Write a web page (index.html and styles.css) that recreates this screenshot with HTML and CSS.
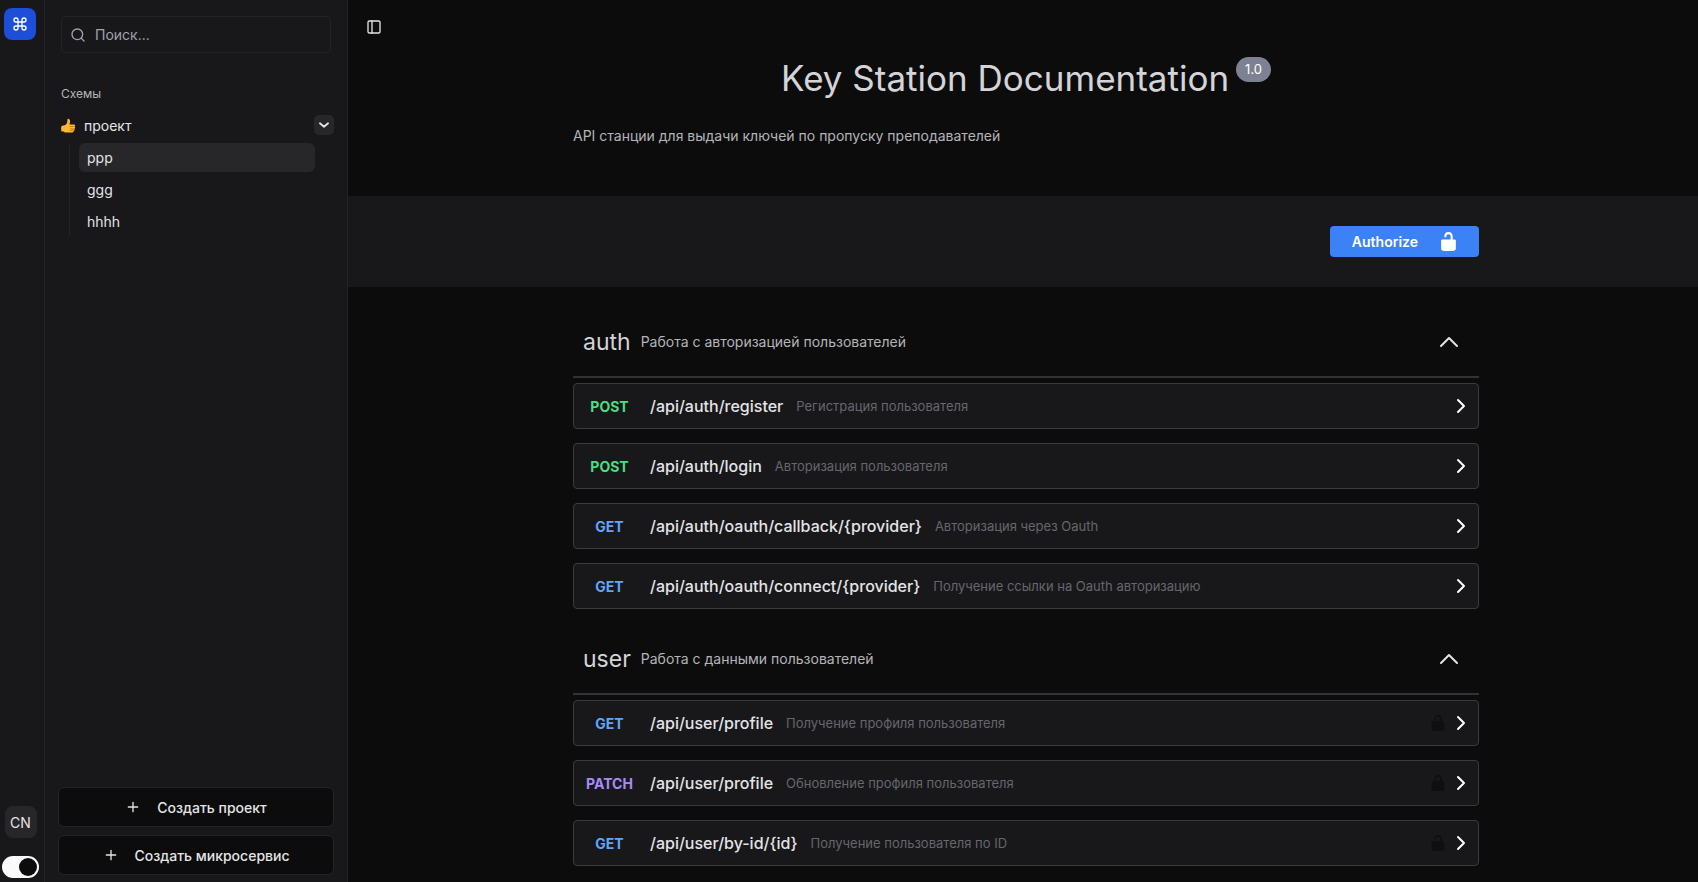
FILE: index.html
```html
<!DOCTYPE html>
<html lang="ru">
<head>
    <meta charset="UTF-8">
    <title>Key Station Documentation</title>
    <link rel="stylesheet" href="styles.css">
</head>
<body>
<!-- общие иконки -->
<svg class="sprite" aria-hidden="true">
    <symbol id="plus" viewBox="0 0 24 24"><path d="M5 12h14M12 5v14"/></symbol>
    <symbol id="right" viewBox="0 0 10 16"><path d="M2 2l6 6-6 6"/></symbol>
    <symbol id="up" viewBox="0 0 20 12"><path d="M2 10l8-8 8 8"/></symbol>
    <symbol id="locked" viewBox="0 0 20 20"><path d="M15.8 8H14V5.6C14 2.7 12.7 1 10 1 7.2 1 6 2.7 6 5.6V8H4c-.6 0-1 .6-1 1.2V17c0 .7.5 1.4 1.2 1.6l1.4.4h8.8l1.4-.4c.7-.2 1.2-.9 1.2-1.6V9.2c0-.6-.7-1.2-1.2-1.2zM12 8H8V5.200C8 3.700 8.700 3 10 3s2 .7 2 2.200z"/></symbol>
    <symbol id="unlocked" viewBox="0 0 20 20"><path d="M15.8 8H14V5.6C14 2.7 12.7 1 10 1 7.2 1 6 2.7 6 5.6V6h2v-.8C8 3.7 8.7 3 10 3s2 .7 2 2.200V8H4c-.6 0-1 .6-1 1.2V17c0 .7.5 1.4 1.2 1.6l1.4.4h8.8l1.4-.4c.7-.2 1.2-.9 1.2-1.6V9.2c0-.6-.7-1.2-1.2-1.2z"/></symbol>
</svg>

<div class="app">
    <nav class="rail">
        <a class="logo" href="#" aria-label="Главная">
            <svg viewBox="0 0 24 24"><path d="M15 6v12a3 3 0 1 0 3-3H6a3 3 0 1 0 3 3V6a3 3 0 1 0-3 3h12a3 3 0 1 0-3-3"/></svg>
        </a>
        <div class="rail-bottom">
            <button class="avatar" type="button">CN</button>
            <input class="switch" type="checkbox" checked aria-label="Тёмная тема">
        </div>
    </nav>

    <aside class="sidebar">
        <label class="search">
            <svg viewBox="0 0 24 24"><circle cx="11" cy="11" r="8"/><path d="M21 21l-4.3-4.3"/></svg>
            <input type="text" placeholder="Поиск..." aria-label="Поиск">
        </label>

        <div class="tree">
            <h2>Схемы</h2>
            <div class="project">
                <svg class="thumb" viewBox="0 0 28 28">
                    <path fill="#fdb92c" d="M8 13c4-2 4-6 4-10 0-3 5-2 5 3 0 2-1 4-1 6h8c3 0 3 3 1 4 2 1 2 3 0 4 1 1 0 3-1 3 0 2-1 4-3 4H9c-3 0-3-2-4-2H1c-1-3-1-7 0-10z"/>
                    <path fill="none" stroke="#d98012" d="M17 16h8M18 20h7M17 23h7"/>
                </svg>
                <span>проект</span>
                <button class="toggle" type="button" aria-label="Свернуть">
                    <svg viewBox="0 0 24 24"><path d="M5 9l7 6 7-6"/></svg>
                </button>
            </div>
            <ul>
                <li><a class="active" href="#">ppp</a></li>
                <li><a href="#">ggg</a></li>
                <li><a href="#">hhhh</a></li>
            </ul>
        </div>

        <div class="create">
            <button type="button"><svg viewBox="0 0 24 24"><use href="#plus"/></svg>Создать проект</button>
            <button type="button"><svg viewBox="0 0 24 24"><use href="#plus"/></svg>Создать микросервис</button>
        </div>
    </aside>

    <main class="content">
        <button class="panel" type="button" aria-label="Боковая панель">
            <svg viewBox="0 0 24 24"><rect x="3" y="3" width="18" height="18" rx="2"/><path d="M9 3v18"/></svg>
        </button>

        <header class="info wrapper">
            <h1>Key Station Documentation <span class="version">1.0</span></h1>
            <p>API станции для выдачи ключей по пропуску преподавателей</p>
        </header>

        <div class="auth-bar wrapper">
            <button class="authorize" type="button">Authorize<svg viewBox="0 0 20 20"><use href="#unlocked"/></svg></button>
        </div>

        <div class="tags wrapper">
            <section class="tag">
                <div class="tag-head">
                    <h3>auth</h3>
                    <p>Работа с авторизацией пользователей</p>
                    <button type="button" aria-label="Свернуть auth"><svg viewBox="0 0 20 12"><use href="#up"/></svg></button>
                </div>
                <button class="op post" type="button">
                    <span class="method">POST</span><span class="path">/api/auth/register</span><span class="desc">Регистрация пользователя</span>
                    <svg class="arrow" viewBox="0 0 10 16"><use href="#right"/></svg>
                </button>
                <button class="op post" type="button">
                    <span class="method">POST</span><span class="path">/api/auth/login</span><span class="desc">Авторизация пользователя</span>
                    <svg class="arrow" viewBox="0 0 10 16"><use href="#right"/></svg>
                </button>
                <button class="op get" type="button">
                    <span class="method">GET</span><span class="path">/api/auth/oauth/callback/{provider}</span><span class="desc">Авторизация через Oauth</span>
                    <svg class="arrow" viewBox="0 0 10 16"><use href="#right"/></svg>
                </button>
                <button class="op get" type="button">
                    <span class="method">GET</span><span class="path">/api/auth/oauth/connect/{provider}</span><span class="desc">Получение ссылки на Oauth авторизацию</span>
                    <svg class="arrow" viewBox="0 0 10 16"><use href="#right"/></svg>
                </button>
            </section>

            <section class="tag">
                <div class="tag-head">
                    <h3>user</h3>
                    <p>Работа с данными пользователей</p>
                    <button type="button" aria-label="Свернуть user"><svg viewBox="0 0 20 12"><use href="#up"/></svg></button>
                </div>
                <button class="op get" type="button">
                    <span class="method">GET</span><span class="path">/api/user/profile</span><span class="desc">Получение профиля пользователя</span>
                    <svg class="lock" viewBox="0 0 20 20"><use href="#locked"/></svg>
                    <svg class="arrow" viewBox="0 0 10 16"><use href="#right"/></svg>
                </button>
                <button class="op patch" type="button">
                    <span class="method">PATCH</span><span class="path">/api/user/profile</span><span class="desc">Обновление профиля пользователя</span>
                    <svg class="lock" viewBox="0 0 20 20"><use href="#locked"/></svg>
                    <svg class="arrow" viewBox="0 0 10 16"><use href="#right"/></svg>
                </button>
                <button class="op get" type="button">
                    <span class="method">GET</span><span class="path">/api/user/by-id/{id}</span><span class="desc">Получение пользователя по ID</span>
                    <svg class="lock" viewBox="0 0 20 20"><use href="#unlocked"/></svg>
                    <svg class="arrow" viewBox="0 0 10 16"><use href="#right"/></svg>
                </button>
            </section>
        </div>
    </main>
</div>
</body>
</html>
```
FILE: styles.css
```css
*{
    padding: 0;
    margin: 0;
    box-sizing: border-box;
}

body{
    background: #0c0c0d;
    color: #e4e4e7;
    font-family: Inter, "Liberation Sans", sans-serif;
    font-size: 14px;
}

button, input{
    font: inherit;
    color: inherit;
    border: none;
    background: none;
}

a{
    color: inherit;
    text-decoration: none;
}

svg{
    flex: none;
    fill: none;
    stroke: currentColor;
    stroke-width: 2;
    stroke-linecap: round;
    stroke-linejoin: round;
}

.sprite{
    display: none;
}

.app{
    display: flex;
    height: 100vh;
    overflow: hidden;
}

/* узкая полоса слева */
.rail{
    width: 45px;
    flex: none;
    padding: 8px 4px 4px 2px;
    display: flex;
    flex-direction: column;
    align-items: flex-start;
    justify-content: space-between;
    background: #18181b;
    border-right: 1px solid #232326;
}

.logo{
    width: 32px;
    height: 32px;
    margin-left: 2px;
    display: grid;
    place-items: center;
    border-radius: 8px;
    background: #1d4ed8;
    color: #fff;
}

.logo svg{
    width: 16px;
    height: 16px;
}

.rail-bottom{
    display: flex;
    flex-direction: column;
    align-items: center;
    gap: 18px;
}

.avatar{
    width: 32px;
    height: 32px;
    border-radius: 8px;
    background: #27272a;
}

.switch{
    appearance: none;
    width: 37px;
    height: 22px;
    flex: none;
    padding: 2px;
    display: flex;
    justify-content: flex-end;
    border-radius: 11px;
    background: #fafafa;
}

.switch::before{
    content: "";
    width: 18px;
    height: 18px;
    border-radius: 50%;
    background: #0c0c0d;
}

/* дерево проектов */
.sidebar{
    width: 303px;
    flex: none;
    padding: 16px 13px 7px;
    display: flex;
    flex-direction: column;
    background: #18181b;
    border-right: 1px solid #232326;
}

.search{
    height: 37px;
    margin: 0 3px;
    padding: 0 8px;
    display: flex;
    align-items: center;
    gap: 9px;
    border: 1px solid #232326;
    border-radius: 4px;
    color: #a1a1aa;
}

.search svg{
    width: 16px;
    height: 16px;
}

.search input{
    width: 100%;
    outline: none;
}

.search input::placeholder{
    color: #a1a1aa;
}

.tree{
    flex: 1;
    padding: 32px 3px 0;
}

.tree h2{
    font-size: 12px;
    line-height: 18px;
    font-weight: 400;
    color: #b4b4b8;
}

.project{
    height: 32px;
    margin: 6px 0 2px;
    display: flex;
    align-items: center;
    gap: 8px;
}

.thumb{
    width: 15px;
    height: 15px;
    stroke: none;
}

.toggle{
    width: 20px;
    height: 20px;
    margin-left: auto;
    margin-right: -3px;
    display: grid;
    place-items: center;
    border-radius: 5px;
    background: #27272a;
}

.toggle svg{
    width: 14px;
    height: 14px;
    stroke-width: 3;
}

.tree ul{
    list-style: none;
    margin: 0 16px 0 8px;
    padding-left: 9px;
    display: grid;
    gap: 3px;
    border-left: 1px solid #232326;
}

.tree a{
    display: block;
    padding: 0 8px;
    line-height: 29px;
    border-radius: 6px;
}

.tree .active{
    background: #27272a;
}

.create{
    display: grid;
    gap: 8px;
}

.create button{
    height: 40px;
    display: flex;
    align-items: center;
    justify-content: center;
    gap: 16px;
    border: 1px solid #232326;
    border-radius: 6px;
    background: #0c0c0d;
    font-weight: 500;
}

.create svg{
    width: 16px;
    height: 16px;
}

/* документация */
.content{
    flex: 1;
    min-width: 0;
    display: grid;
    align-content: start;
    overflow: hidden;
}

.wrapper{
    padding: 0 219px 0 225px;
}

.panel{
    width: 16px;
    height: 16px;
    margin: 19px 0 0 18px;
}

.panel svg{
    display: block;
    width: 16px;
    height: 16px;
}

.info{
    height: 161px;
    padding-top: 20px;
}

.info h1{
    display: flex;
    justify-content: center;
    gap: 7px;
    font-size: 35px;
    line-height: 46px;
    font-weight: 400;
    color: #d4d4d8;
}

.version{
    align-self: flex-start;
    margin-top: 2px;
    padding: 0 9px;
    border-radius: 13px;
    background: #7d8293;
    color: #fff;
    font-size: 13px;
    line-height: 25px;
}

.info p{
    margin-top: 25px;
    line-height: 20px;
    color: #b4b4b8;
}

.auth-bar{
    height: 91px;
    display: flex;
    align-items: center;
    justify-content: flex-end;
    background: #18181b;
}

.authorize{
    width: 149px;
    height: 31px;
    padding-right: 20px;
    display: flex;
    align-items: center;
    justify-content: flex-end;
    gap: 20px;
    border-radius: 4px;
    background: #3b82f6;
    color: #fff;
    font-weight: 600;
}

.authorize svg{
    width: 21px;
    height: 21px;
    fill: currentColor;
    stroke: none;
}

.tags{
    padding-top: 19px;
}

.tag{
    padding-top: 1px;
}

.tag-head{
    height: 71px;
    margin-bottom: 5px;
    padding: 0 20px 0 10px;
    display: flex;
    align-items: center;
    gap: 10px;
    border-bottom: 2px solid #333336;
}

.tag-head h3{
    font-size: 23px;
    line-height: 30px;
    font-weight: 400;
    color: #d4d4d8;
}

.tag-head p{
    color: #b4b4b8;
}

.tag-head button{
    margin-left: auto;
}

.tag-head svg{
    display: block;
    width: 20px;
    height: 12px;
}

.op{
    width: 100%;
    height: 46px;
    margin-bottom: 14px;
    padding: 0 12px 0 0;
    display: flex;
    align-items: center;
    border: 1px solid #3a3a3d;
    border-radius: 4px;
    background: #18181b;
}

.method{
    width: 71px;
    text-align: center;
    font-weight: 700;
}

.path{
    margin: 0 13px 0 5px;
    font-size: 16px;
    font-weight: 500;
}

.desc{
    margin-right: auto;
    font-size: 13px;
    color: #66666b;
}

.post .method{
    color: #4ade80;
}

.get .method{
    color: #60a5fa;
}

.patch .method{
    color: #a78bfa;
}

.arrow{
    width: 10px;
    height: 16px;
    color: #fff;
}

.lock{
    width: 18px;
    height: 18px;
    margin-right: 9px;
    fill: #0f0f10;
    stroke: none;
}
```
